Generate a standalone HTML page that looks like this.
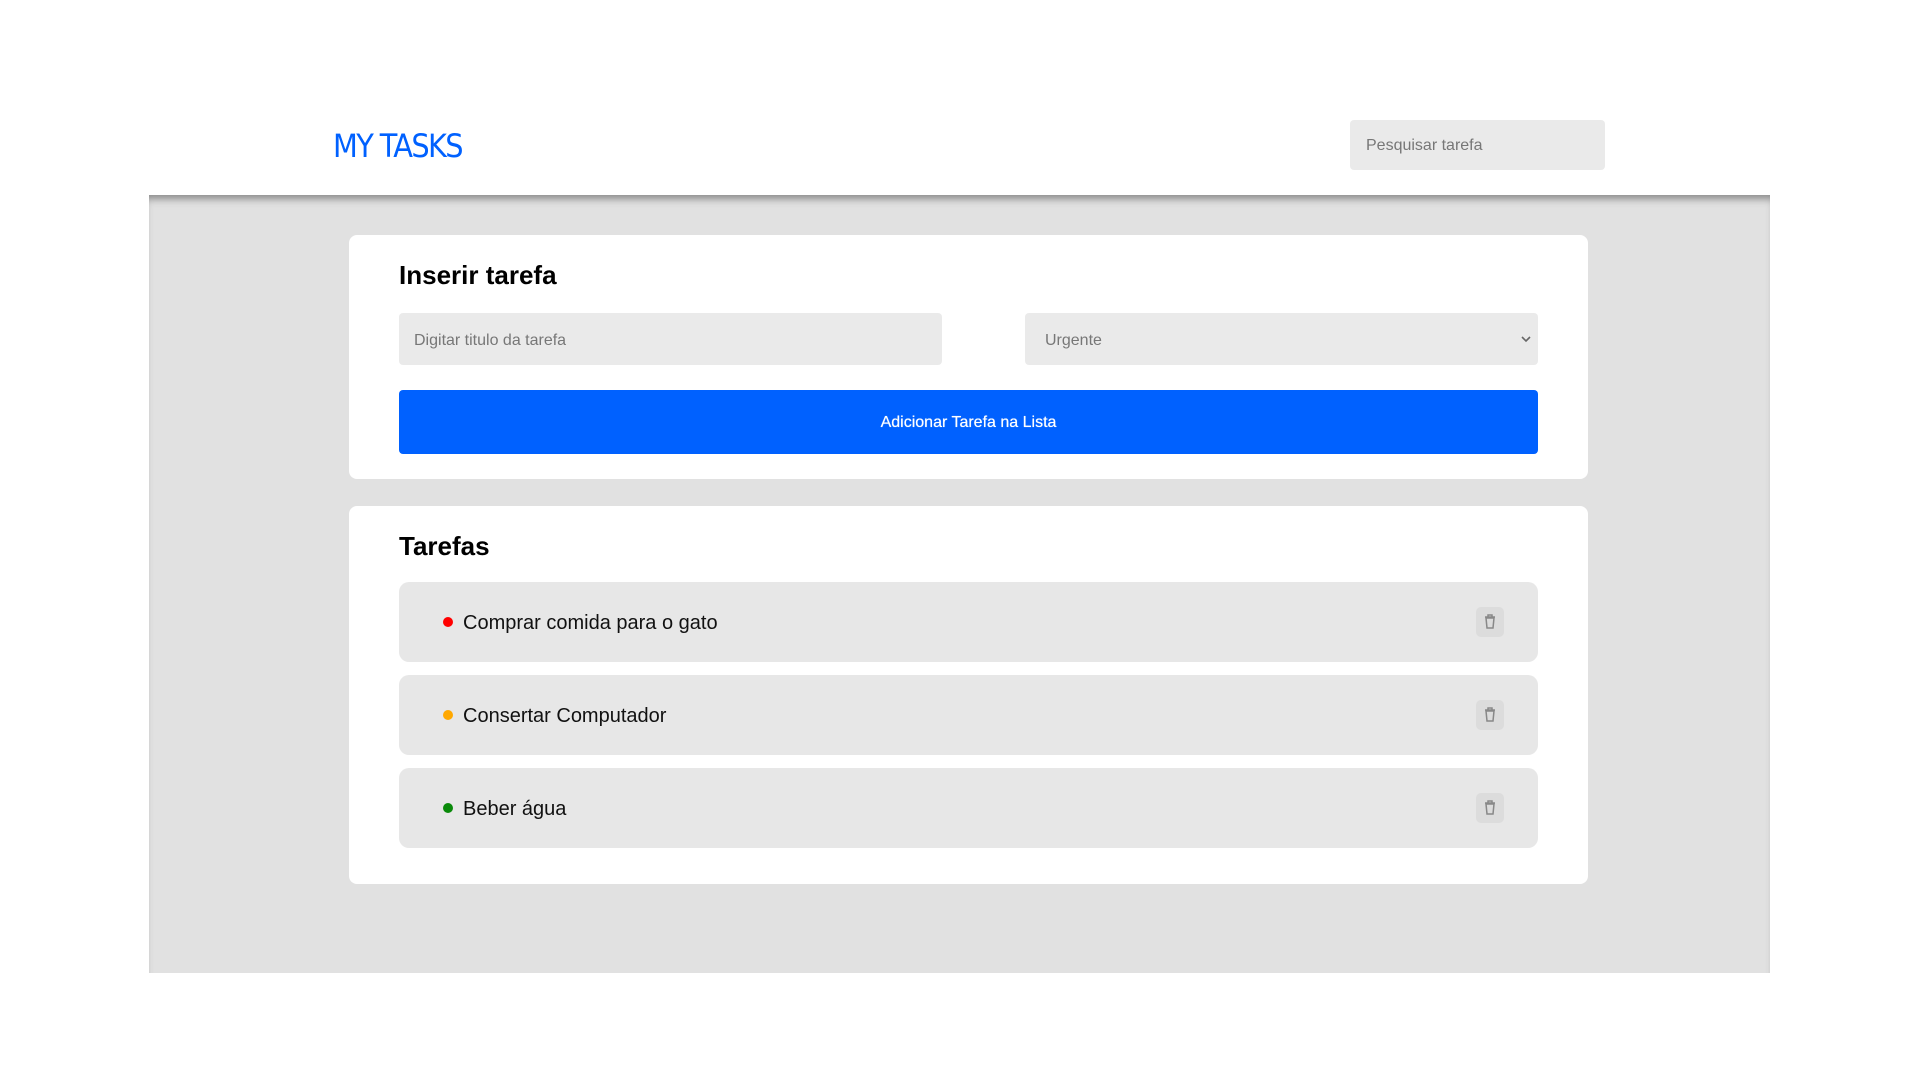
<!DOCTYPE html>
<html><head><meta charset="utf-8"><style>
*{box-sizing:border-box;margin:0;padding:0}
body{width:1920px;height:1080px;background:#fff;font-family:"Liberation Sans",Roboto,sans-serif;position:relative;overflow:hidden}
.abs{position:absolute}
.logo{left:333px;top:127px;font-size:32px;color:#0061ff;letter-spacing:-1.6px;font-family:"DejaVu Sans Condensed","Liberation Sans",sans-serif}
.search{left:1350px;top:120px;width:255px;height:50px;background:#eaeaea;border-radius:4px;color:#777;font-size:16px;padding:17px 16px}
.main{left:149px;top:195px;width:1621px;height:778px;background:#e1e1e1;box-shadow:inset 0 8px 8px -4px #8a8a8a}
.card{background:#fff;border-radius:8px;left:349px;width:1239px}
h2{position:absolute;left:50px;font-size:26px;font-weight:bold;color:#000}
.in{background:#eaeaea;border-radius:4px;height:52px;color:#777;font-size:16px;padding:19px 15px;position:absolute;top:78px}
.btn{position:absolute;left:50px;top:155px;width:1139px;height:64px;background:#0061ff;border-radius:4px;color:#fff;font-size:16px;font-weight:normal;text-shadow:0 0 0.6px #fff;text-align:center;line-height:66px}
.item{position:absolute;left:50px;width:1139px;height:80px;background:#e7e7e7;border-radius:10px}
.dot{position:absolute;left:44px;top:35px;width:10px;height:10px;border-radius:50%}
.t{position:absolute;left:64px;top:30px;font-size:20px;color:#111}
.tr{position:absolute;left:1077px;top:25px;width:28px;height:30px;background:#dcdcdc;border-radius:5px}
</style></head><body>
<div class="abs logo">MY TASKS</div>
<div class="abs search">Pesquisar tarefa</div>
<div class="abs main"></div>
<div class="abs card" style="top:235px;height:244px">
<h2 style="top:25px">Inserir tarefa</h2>
<div class="in" style="left:50px;width:543px">Digitar titulo da tarefa</div>
<div class="in" style="left:676px;width:513px;padding-left:20px">Urgente
<svg style="position:absolute;right:6px;top:21px" width="12" height="10" viewBox="0 0 12 10"><path d="M2 3l4 4 4-4" stroke="#666" stroke-width="1.6" fill="none"/></svg></div>
<div class="btn">Adicionar Tarefa na Lista</div>
</div>
<div class="abs card" style="top:506px;height:378px">
<h2 style="top:25px">Tarefas</h2>
<div class="item" style="top:76px"><div class="dot" style="background:#f00"></div><div class="t">Comprar comida para o gato</div><div class="tr"><svg width="28" height="30" viewBox="0 0 28 30"><path d="M9 10h10M12 10V8h4v2M10 11h8l-1 10h-6z" stroke="#888" stroke-width="1.5" fill="none"/></svg></div></div>
<div class="item" style="top:169px"><div class="dot" style="background:#ffa800"></div><div class="t">Consertar Computador</div><div class="tr"><svg width="28" height="30" viewBox="0 0 28 30"><path d="M9 10h10M12 10V8h4v2M10 11h8l-1 10h-6z" stroke="#888" stroke-width="1.5" fill="none"/></svg></div></div>
<div class="item" style="top:262px"><div class="dot" style="background:#0a8a0a"></div><div class="t">Beber água</div><div class="tr"><svg width="28" height="30" viewBox="0 0 28 30"><path d="M9 10h10M12 10V8h4v2M10 11h8l-1 10h-6z" stroke="#888" stroke-width="1.5" fill="none"/></svg></div></div>
</div>
</body></html>
